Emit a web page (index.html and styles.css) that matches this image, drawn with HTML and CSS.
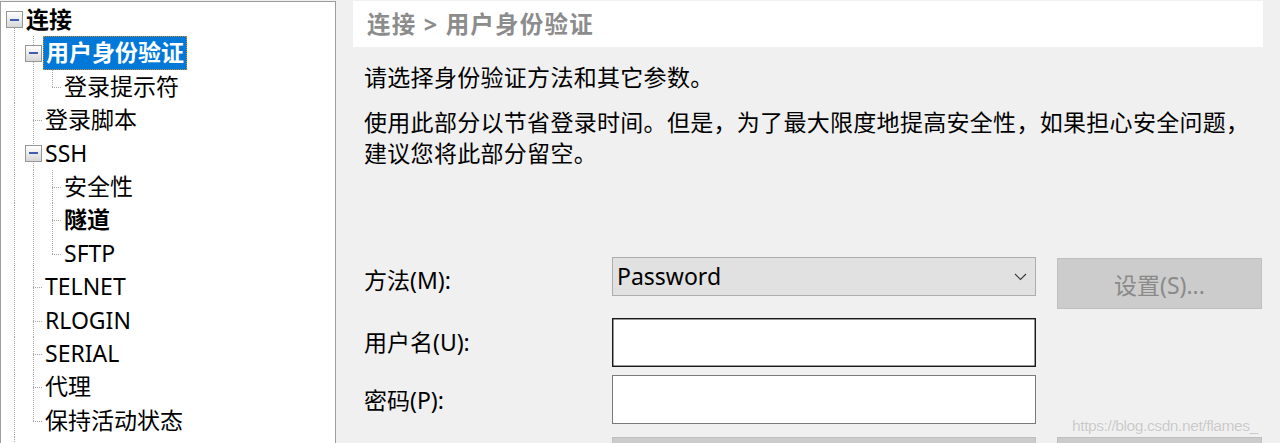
FILE: index.html
```html
<!DOCTYPE html>
<html lang="zh-CN">
<head>
<meta charset="utf-8">
<title>会话选项 - 用户身份验证</title>
<link rel="stylesheet" href="styles.css">
</head>
<body>
<nav class="tree">
  <div class="row"><span class="cell cell-box root"><span class="box"></span></span><span class="label bold">连接</span></div>
  <div class="row"><span class="cell cell-v"></span><span class="cell cell-box"><span class="box"></span></span><span class="label bold selected">用户身份验证</span></div>
  <div class="row"><span class="cell cell-v"></span><span class="cell cell-v"></span><span class="cell cell-end"></span><span class="label">登录提示符</span></div>
  <div class="row"><span class="cell cell-v"></span><span class="cell cell-tee"></span><span class="label">登录脚本</span></div>
  <div class="row"><span class="cell cell-v"></span><span class="cell cell-box"><span class="box"></span></span><span class="label">SSH</span></div>
  <div class="row"><span class="cell cell-v"></span><span class="cell cell-v"></span><span class="cell cell-tee"></span><span class="label">安全性</span></div>
  <div class="row"><span class="cell cell-v"></span><span class="cell cell-v"></span><span class="cell cell-tee"></span><span class="label bold">隧道</span></div>
  <div class="row"><span class="cell cell-v"></span><span class="cell cell-v"></span><span class="cell cell-end"></span><span class="label">SFTP</span></div>
  <div class="row"><span class="cell cell-v"></span><span class="cell cell-tee"></span><span class="label">TELNET</span></div>
  <div class="row"><span class="cell cell-v"></span><span class="cell cell-tee"></span><span class="label">RLOGIN</span></div>
  <div class="row"><span class="cell cell-v"></span><span class="cell cell-tee"></span><span class="label">SERIAL</span></div>
  <div class="row"><span class="cell cell-v"></span><span class="cell cell-tee"></span><span class="label">代理</span></div>
  <div class="row"><span class="cell cell-v"></span><span class="cell cell-end"></span><span class="label">保持活动状态</span></div>
  <div class="row"><span class="cell cell-v"></span></div>
</nav>

<main class="panel">
  <header class="crumb">连接 &gt; 用户身份验证</header>
  <p class="intro">请选择身份验证方法和其它参数。</p>
  <p class="desc">使用此部分以节省登录时间。但是，为了最大限度地提高安全性，如果担心安全问题，建议您将此部分留空。</p>

  <div class="form">
    <div class="flabel l1">方法(M):</div>
    <div class="select"><span>Password</span>
      <svg class="chev" width="13" height="8" viewBox="0 0 13 8"><path d="M1 1 L6.5 6.5 L12 1" fill="none" stroke="#3a3a3a" stroke-width="1.1"/></svg>
    </div>
    <div class="btn">设置(S)...</div>

    <div class="flabel l2">用户名(U):</div>
    <div class="input focus"></div>
    <div></div>

    <div class="flabel l3">密码(P):</div>
    <div class="input"></div>
    <div></div>

    <div></div>
    <div class="ghost"></div>
    <div class="ghost"></div>
  </div>

  <div class="watermark">https://blog.csdn.net/flames_</div>
</main>
</body>
</html>
```

FILE: styles.css
```css
html, body {
  margin: 0;
  padding: 0;
}

body {
  box-sizing: border-box;
  height: 443px;
  overflow: hidden;
  padding-top: 1px;
  background: #f0f0f0;
  display: flex;
  align-items: flex-start;
  font-family: "Noto Sans", "Noto Sans CJK SC", sans-serif;
  color: #000;
}

/* ---------- tree ---------- */
.tree {
  --dv: repeating-linear-gradient(to bottom, #a3a3a3 0 1px, transparent 1px 2px);
  --dh: repeating-linear-gradient(to right, #a3a3a3 0 1px, transparent 1px 2px);
  box-sizing: border-box;
  flex: none;
  width: 336px;
  height: 470px;
  background: #fff;
  border: 1px solid #9c9c9c;
  padding: 1px 0 0 4px;
  font-size: 23px;
}

.row {
  display: flex;
  align-items: stretch;
  height: 33.4px;
  line-height: 33.4px;
}

.cell {
  flex: none;
  width: 19px;
  display: flex;
  align-items: center;
  justify-content: center;
}

.cell-v {
  background: var(--dv) 9px 0 / 1px 100% no-repeat;
}

.cell-tee {
  background:
    var(--dh) 9px 17px / 10px 1px no-repeat,
    var(--dv) 9px 0 / 1px 100% no-repeat;
}

.cell-end {
  background:
    var(--dh) 9px 17px / 10px 1px no-repeat,
    var(--dv) 9px 0 / 1px 17px no-repeat;
}

.cell-box {
  background: var(--dv) 9px 0 / 1px 100% no-repeat;
}

.cell-box.root {
  background: var(--dv) 9px 100% / 1px 50% no-repeat;
}

.box {
  box-sizing: border-box;
  flex: none;
  width: 17px;
  height: 17px;
  border: 1px solid #969696;
  background: linear-gradient(#ffffff, #d6d6d6);
  display: flex;
  align-items: center;
  justify-content: center;
}

.box::after {
  content: "";
  width: 9px;
  height: 2px;
  background: #3f5cae;
}

.label {
  padding: 0 3px 0 2px;
  white-space: nowrap;
}

.bold {
  font-weight: 700;
}

.selected {
  box-sizing: border-box;
  background: #0078d7;
  color: #fff;
  outline: 1px dotted #d08a3c;
  outline-offset: -1px;
  padding: 0 3px 0 3px;
}

/* ---------- right panel ---------- */
.panel {
  position: relative;
  flex: none;
  width: 910px;
  margin-left: 17px;
  font-size: 23px;
  letter-spacing: 0.3px;
}

.crumb {
  height: 46px;
  line-height: 46px;
  background: #fff;
  padding-left: 14px;
  color: #8c8c8c;
  font-weight: 700;
  font-size: 23.5px;
  letter-spacing: 1.2px;
}

.intro,
.desc {
  margin: 0;
  padding-left: 11px;
  line-height: 31px;
}

.intro {
  margin-top: 14.5px;
}

.desc {
  margin-top: 14px;
}

.form {
  margin: 88.5px 0 0 11px;
  display: grid;
  grid-template-columns: 227px 424px 205px;
  grid-template-rows: 61px 57px 62px 40px;
  column-gap: 21px;
  align-items: start;
}

.flabel {
  line-height: 31px;
  letter-spacing: 0;
}

.l1 { padding-top: 7.5px; }
.l2 { padding-top: 8.5px; }
.l3 { padding-top: 9.5px; }

.select {
  box-sizing: border-box;
  height: 39px;
  background: #e1e1e1;
  border: 1px solid #adadad;
  padding: 0 8px 0 4px;
  display: flex;
  align-items: center;
  justify-content: space-between;
  letter-spacing: 0;
  line-height: 37px;
}

.chev {
  display: block;
  margin-top: 1px;
}

.btn {
  box-sizing: border-box;
  margin-top: 1px;
  height: 51px;
  background: #cccccc;
  border: 1px solid #bfbfbf;
  color: #8a8a8a;
  display: flex;
  align-items: center;
  justify-content: center;
  letter-spacing: 0;
}

.input {
  box-sizing: border-box;
  height: 49px;
  background: #fff;
  border: 1px solid #7a7a7a;
}

.input.focus {
  border: 1px solid #1a1a1a;
  box-shadow: inset 0 0 0 0.5px #333;
}

.ghost {
  box-sizing: border-box;
  height: 40px;
  background: #cccccc;
  border: 1px solid #bfbfbf;
}

.watermark {
  position: absolute;
  left: 719px;
  top: 416px;
  font-family: "Liberation Sans", sans-serif;
  font-size: 15.5px;
  line-height: 18px;
  letter-spacing: -0.4px;
  color: #c9c9c9;
  text-shadow: 0 0 1px #fff;
}
```
